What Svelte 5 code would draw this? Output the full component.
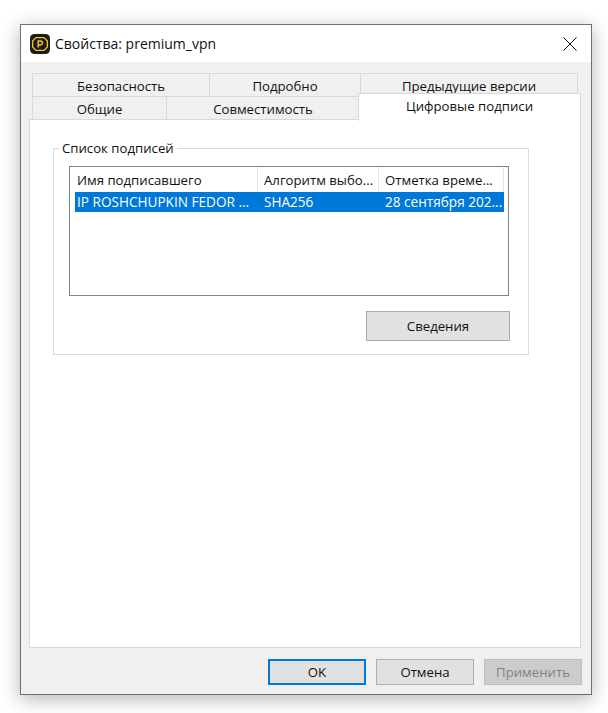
<script>
  const backTabs = [
    { label: "Безопасность", width: 178 },
    { label: "Подробно", width: 152 },
    { label: "Предыдущие версии", width: 218 }
  ]
  const frontTabs = [
    { label: "Общие", width: 135 },
    { label: "Совместимость", width: 194 }
  ]
  const columns = [
    { label: "Имя подписавшего", value: "IP ROSHCHUPKIN FEDOR ...", width: 183 },
    { label: "Алгоритм выбо...", value: "SHA256", width: 121 },
    { label: "Отметка време...", value: "28 сентября 202...", width: 125 }
  ]
</script>

<div class="window">
  <header class="titlebar">
    <svg class="logo" viewBox="0 0 20 20" width="20" height="20">
      <rect width="20" height="20" rx="4.5" fill="#1c1c1a" />
      <path d="M6 3.6h8L17.4 7v6L14 16.4H6L2.6 13V7z" fill="none" stroke="#f4c422" stroke-width="1.3" stroke-linejoin="round" />
      <path d="M8.2 13.4V7h2.3a1.9 1.9 0 0 1 0 3.9H8.2" fill="none" stroke="#f4c422" stroke-width="1.5" />
    </svg>
    <span class="title">Свойства: premium_vpn</span>
    <svg class="close" viewBox="0 0 14 14" width="14" height="14">
      <path d="M0.5 0.5l13 13M13.5 0.5l-13 13" stroke="#111" stroke-width="1" fill="none" />
    </svg>
  </header>

  <div class="body">
    <div class="tabs">
      <div class="tabrow back">
        {#each backTabs as tab}
          <div class="tab" style="width: {tab.width}px">{tab.label}</div>
        {/each}
      </div>
      <div class="tabrow front">
        {#each frontTabs as tab}
          <div class="tab" style="width: {tab.width}px">{tab.label}</div>
        {/each}
      </div>
      <div class="tab active">Цифровые подписи</div>
    </div>

    <main class="panel">
      <fieldset class="group">
        <legend>Список подписей</legend>
        <div class="list">
          <div class="row head">
            {#each columns as col}
              <div class="cell" style="width: {col.width}px">{col.label}</div>
            {/each}
          </div>
          <div class="row selected">
            {#each columns as col}
              <div class="cell" style="width: {col.width}px">{col.value}</div>
            {/each}
          </div>
        </div>
        <div class="details">
          <button type="button" class="btn wide">Сведения</button>
        </div>
      </fieldset>
    </main>

    <footer class="actions">
      <button type="button" class="btn default">OK</button>
      <button type="button" class="btn">Отмена</button>
      <button type="button" class="btn disabled">Применить</button>
    </footer>
  </div>
</div>

<style>
  :global(body) {
    background: #fff;
    height: 713px;
    overflow: hidden;
  }

  .window {
    box-sizing: border-box;
    width: 572px;
    height: 671px;
    margin: 24px 0 0 20px;
    border: 1px solid #6f6f6f;
    background: #fff;
    box-shadow: 0 4px 18px rgba(0, 0, 0, 0.3);
    font-family: "Open Sans", "Noto Sans", sans-serif;
    font-size: 13.2px;
    color: #111;
    display: flex;
    flex-direction: column;
  }

  .titlebar {
    height: 37px;
    display: flex;
    align-items: center;
    padding: 0 14px 0 9px;
    background: #fff;
    flex: none;
  }

  .logo {
    margin-right: 5px;
  }

  .title {
    font-size: 14px;
    flex: 1;
  }

  .body {
    flex: 1;
    background: #f0f0f0;
    padding: 11px 9px 0 8px;
    display: flex;
    flex-direction: column;
  }

  .tabs {
    position: relative;
    height: 46px;
    padding-left: 3px;
  }

  .tabrow {
    display: flex;
    height: 23px;
  }

  .tab {
    box-sizing: border-box;
    height: 23px;
    border: 1px solid #d9d9d9;
    border-bottom: 0;
    margin-right: -1px;
    text-align: center;
    line-height: 25px;
    white-space: nowrap;
  }

  .tabrow.front .tab {
    border-bottom: 1px solid #d9d9d9;
    height: 24px;
  }

  .tab.active {
    position: absolute;
    left: 329px;
    top: 20px;
    width: 223px;
    height: 28px;
    background: #fff;
    z-index: 1;
    margin: 0;
    line-height: 25px;
  }

  .panel {
    box-sizing: border-box;
    height: 529px;
    width: 552px;
    background: #fff;
    border: 1px solid #d9d9d9;
    padding: 22px 51px 0 23px;
  }

  .group {
    box-sizing: border-box;
    height: 215px;
    margin: -2px 0 0;
    padding: 10px 20px 0 15px;
    border: 1px solid #dcdcdc;
    min-width: 0;
  }

  legend {
    padding: 0 3px;
    margin-left: -10px;
    line-height: 16px;
  }

  .list {
    box-sizing: border-box;
    height: 130px;
    width: 440px;
    border: 1px solid #82828c;
    background: #fff;
    padding: 0 0 0 5px;
  }

  .row {
    display: flex;
    width: 429px;
  }

  .head {
    height: 25px;
    line-height: 26px;
  }

  .head .cell {
    border-right: 1px solid #e5e5e5;
  }

  .selected {
    height: 20px;
    line-height: 20px;
    background: #0078d7;
    color: #fff;
    font-size: 13.6px;
  }

  .cell {
    padding-left: 6px;
    box-sizing: border-box;
    white-space: nowrap;
    overflow: hidden;
  }

  .cell:first-child {
    padding-left: 2px;
  }

  .details {
    display: flex;
    justify-content: flex-end;
    margin-top: 15px;
    width: 441px;
  }

  .btn {
    box-sizing: border-box;
    width: 98px;
    height: 26px;
    padding: 0;
    border: 1px solid #adadad;
    background: #e1e1e1;
    font: inherit;
    color: #111;
  }

  .btn.wide {
    width: 144px;
    height: 30px;
  }

  .btn.default {
    border: 2px solid #0078d7;
  }

  .btn.disabled {
    background: #cccccc;
    border-color: #bfbfbf;
    color: #838383;
  }

  .actions {
    display: flex;
    justify-content: flex-end;
    gap: 10px;
    margin-top: 11px;
  }
</style>
